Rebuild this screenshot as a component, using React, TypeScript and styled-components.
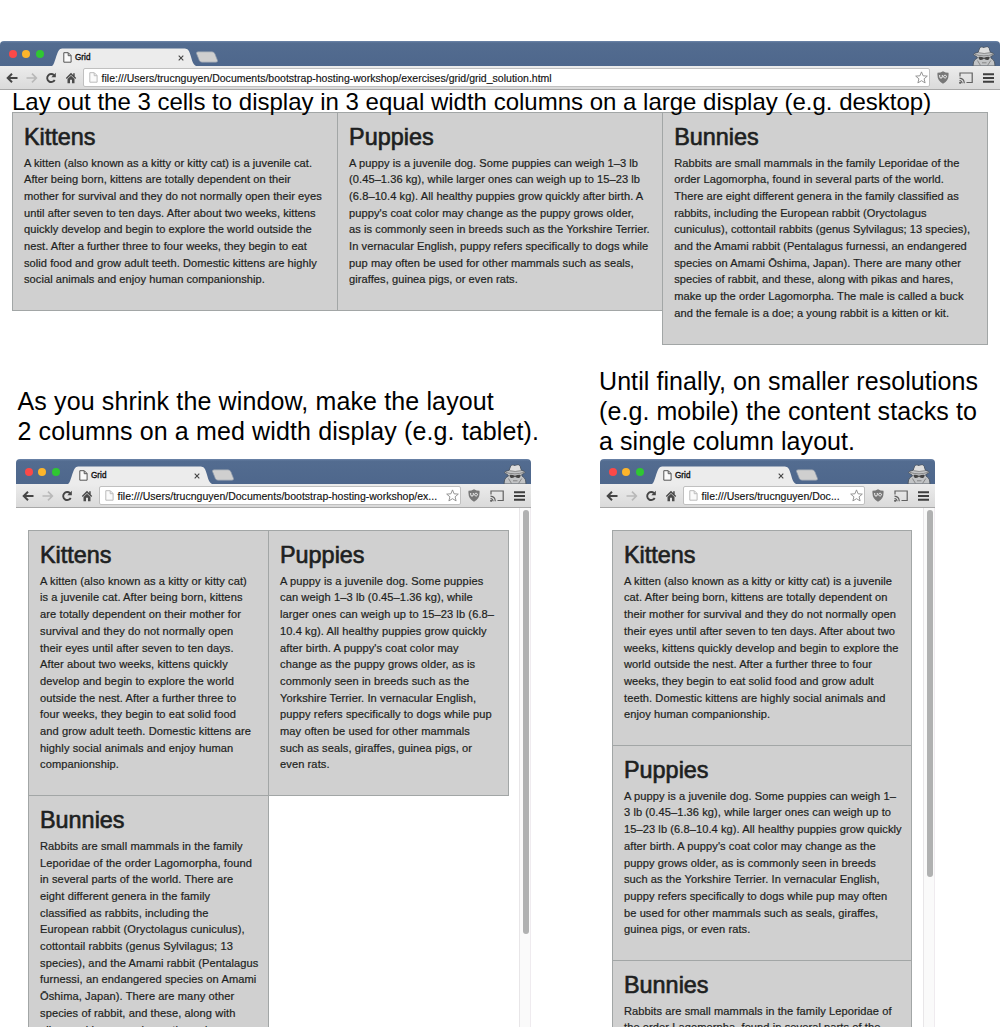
import React from "react";
import styled, { createGlobalStyle } from "styled-components";

const Global = createGlobalStyle`
  * { box-sizing: border-box; }
  html, body { margin: 0; padding: 0; background: #fff; }
  body { font-family: "Liberation Sans", Arial, Helvetica, sans-serif; color: #1d1f21; overflow: hidden; }
`;

const Page = styled.div`
  width: 1000px;
  height: 1027px;
  overflow: hidden;
  padding-top: 40.5px;
  display: flex;
  flex-direction: column;
`;

const Caption = styled.p<{ $size: number; $spacing?: number; $gap?: number; $indent?: number }>`
  margin: 0 0 ${(p) => p.$gap ?? 0}px ${(p) => p.$indent ?? 0}px;
  color: #000;
  font-size: ${(p) => p.$size}px;
  line-height: 30px;
  letter-spacing: ${(p) => p.$spacing ?? 0}px;
  white-space: pre;
`;

const WideCaption = styled(Caption)`
  margin: -3px 0 -5px 12px;
  position: relative;
  z-index: 1;
`;

const Examples = styled.div`
  display: flex;
  align-items: flex-end;
  margin-top: 22px;
`;

const Example = styled.section<{ $width: number; $left: number }>`
  width: ${(p) => p.$width}px;
  margin-left: ${(p) => p.$left}px;
`;

const Window = styled.div`
  width: 100%;
`;

const TabBar = styled.div`
  display: flex;
  align-items: flex-end;
  height: 25.5px;
  padding-left: 8.5px;
  background: linear-gradient(#6d86ab 0, #536c90 2px, #4e678c 100%);
  border-radius: 4px 4px 0 0;
`;

const Lights = styled.div`
  display: flex;
  gap: 5.8px;
  height: 25.5px;
  align-items: center;
  padding-top: 2px;
  width: 43.5px;
`;

const Light = styled.i<{ $color: string }>`
  width: 8px;
  height: 8px;
  border-radius: 50%;
  background: ${(p) => p.$color};
`;

const Tab = styled.div`
  position: relative;
  display: flex;
  align-items: center;
  width: 144px;
  height: 18px;
  padding: 1px 12.5px 0 11px;
  font-size: 8.2px;
  color: #111;
  -webkit-text-stroke: 0.35px #111;

  svg { position: relative; }
  & > svg:first-child { position: absolute; left: 0; top: 0; }
`;

const TabLabel = styled.span`
  position: relative;
  flex: 1;
  padding-left: 3px;
`;

const NewTab = styled.svg`
  margin: 0 0 3px 0;
`;

const Disguise = styled.svg`
  margin-left: auto;
  margin-right: 4px;
`;

const Toolbar = styled.div`
  display: flex;
  align-items: center;
  height: 24px;
  padding: 0 6px 0 6px;
  background: linear-gradient(#ececec, #dadada);
  border-bottom: 1px solid #a8a8a8;
`;

const Nav = styled.div`
  display: flex;
  gap: 7.5px;
  width: 77px;
  svg { width: 12px; height: 12px; flex: none; }
`;

const Address = styled.div`
  display: flex;
  align-items: center;
  flex: 1;
  min-width: 0;
  height: 18.5px;
  padding: 0 1.5px 0 4.5px;
  border: 1px solid #c0c0c0;
  border-radius: 2px;
  background: #fff;
  font-size: 10.5px;
`;

const Url = styled.span`
  flex: 1;
  min-width: 0;
  padding-left: 4px;
  color: #111;
  white-space: nowrap;
  overflow: hidden;
  letter-spacing: 0.015px;
  -webkit-text-stroke: 0.15px #111;
`;

const Extensions = styled.div`
  display: flex;
  align-items: center;
  justify-content: space-between;
  width: 57px;
  margin-left: 7px;
`;

const Body = styled.div<{ $height?: number }>`
  display: flex;
  ${(p) => (p.$height ? `height: ${p.$height}px; overflow: hidden;` : "")}
`;

const Grid = styled.div<{ $columns: number; $cell: number; $spacing: number }>`
  display: grid;
  grid-template-columns: repeat(${(p) => p.$columns}, ${(p) => p.$cell}px);
  align-items: start;
  align-content: start;
  margin: ${(p) => (p.$columns === 3 ? "0 0 0 12px" : "22px 0 0 12px")};
  p { letter-spacing: ${(p) => p.$spacing}px; }
`;

const Cell = styled.article`
  padding: 9px 0 22.2px 11px;
  background: #d0d0d0;
  border: 1px solid #a2a6a6;
  margin: 0 -1px -1px 0;
`;

const Heading = styled.h3`
  margin: 0 0 2.5px;
  font-size: 23.4px;
  line-height: 30px;
  font-weight: 400;
  -webkit-text-stroke: 0.65px #1d1f21;
`;

const Copy = styled.p`
  margin: 0;
  font-size: 11.1px;
  line-height: 16.7px;
  white-space: pre;
  -webkit-text-stroke: 0.2px #1d1f21;
`;

const Track = styled.div`
  width: 12px;
  margin-left: auto;
  padding: 2px 2px 0 2.5px;
  background: #fafafa;
  border-left: 1px solid #e8e6e8;
  border-right: 1px solid #efebef;
`;

const Thumb = styled.div<{ $height: number }>`
  width: 6px;
  height: ${(p) => p.$height}px;
  border-radius: 3px;
  background: #b0b1b1;
`;

const Sheet = ({ color }: { color: string }) => (
  <svg width="9" height="11" viewBox="0 0 9 11" fill="#fafafa" stroke={color}>
    <path d="M.8.7h4.5l2.8 2.8v6.7H.8zM5.2.9v2.8H8" />
  </svg>
);

const Chrome = ({ url }: { url: string }) => (
  <>
    <TabBar>
      <Lights>
        <Light $color="#fb4948" />
        <Light $color="#fdb52b" />
        <Light $color="#2fc732" />
      </Lights>
      <Tab>
        <svg width="144" height="18" viewBox="0 0 143 18" preserveAspectRatio="none">
          <path d="M0 18C3 16 4 6 7 2Q8 .5 10 .5H132Q135 .5 136 3C139 10 139 16 143 18Z" fill="#ececec" />
        </svg>
        <Sheet color="#555" />
        <TabLabel>Grid</TabLabel>
        <svg width="6" height="6" viewBox="0 0 6 6" stroke="#444" strokeWidth="1.1">
          <path d="M.7.7l4.6 4.6M5.3.7L.7 5.3" />
        </svg>
      </Tab>
      <NewTab width="22" height="12" viewBox="0 0 22 12">
        <path d="M2 .8H16Q18 .8 19 3L21.5 9.500Q22 11.200 20 11.200H6Q4 11.200 3.300 9.500L.5 2.500Q0 .8 2 .8Z" fill="#cfcfcf" stroke="#8e99aa" strokeWidth=".7" />
      </NewTab>
      <Disguise width="24" height="20" viewBox="0 0 24 20">
        <path d="M1 20Q1.200 15 3 13.500L5.500 12 4.500 10.500Q1.500 9.500 1.500 8.300 2 7 6.300 6.200L7.800 2Q8.500.8 10.500 1.200 12 1.800 14 1 16.300.5 17 2L18.200 6.200Q22 7 22 8.300 21.500 9.800 18.800 10.500L19 12 21 13.500Q23 15 23 20Z" fill="#c2c4c6" stroke="#4b535f" strokeWidth=".9" />
        <path d="M6.800 6.200L8.200 2.200Q9 1.300 10.500 1.700 12 2.300 14 1.500 16 1 16.600 2.300L17.700 6.200Q12 7.800 6.800 6.200z" fill="#dedede" />
        <path d="M2.500 8.300Q12 11.400 21 8.300" stroke="#777" strokeWidth=".8" fill="none" />
        <path d="M6.500 6.700Q12 8.300 18 6.700" stroke="#8a8a8a" strokeWidth=".9" fill="none" />
        <path d="M6.500 10.900Q9 10.500 12 11.800 15 10.500 17.700 10.900 17.500 14 15 14 13 14 12 12.600 11 14 9 14 6.700 14 6.500 10.900z" fill="#444" />
        <path d="M5.500 14.500L8.500 19.500M18.800 14.500L15.500 19.500M10 16.800h4.500" stroke="#808080" strokeWidth=".9" fill="none" />
      </Disguise>
    </TabBar>
    <Toolbar>
      <Nav>
        <svg viewBox="0 0 12 12" fill="none" stroke="#454545" strokeWidth="2"><path d="M11.500 6H2M6 1.700L1.700 6 6 10.300" /></svg>
        <svg viewBox="0 0 12 12" fill="none" stroke="#b9b9b9" strokeWidth="1.700"><path d="M.5 6H10M6 1.700L10.300 6 6 10.300" /></svg>
        <svg viewBox="0 0 12 12" fill="none" stroke="#454545" strokeWidth="1.900"><path d="M9.700 8A4 4 0 1 1 9 3.200" /><path d="M10.800.8V5.300H6.300z" fill="#454545" stroke="none" /></svg>
        <svg viewBox="0 0 12 12" fill="#4a4a4a"><path d="M6 .8L.8 6l1 1L6 2.900l4.200 4.100 1-1L9.700 4.500V1.300H8.200V3z" /><path d="M2.500 7L6 3.700 9.500 7v4.200H7V7.800H5v3.400H2.500z" /></svg>
      </Nav>
      <Address>
        <Sheet color="#bbb" />
        <Url>{url}</Url>
        <svg width="13" height="13" viewBox="0 0 13 13" fill="#fff" stroke="#8a8a8a" strokeWidth=".9">
          <path d="M6.500.9l1.600 3.900 4.200.3-3.200 2.700 1 4.100-3.600-2.200-3.600 2.200 1-4.100L.7 5.100l4.200-.3z" />
        </svg>
      </Address>
      <Extensions>
        <svg width="12" height="13" viewBox="0 0 12 13">
          <path d="M6 .3q2.500 1.500 5.500 1.500 .8 8-5.500 10.900Q-.3 9.800.5 1.800 3.500 1.800 6 .3z" fill="#777" />
          <path d="M2.700 4v1.800q0 1.300 1.300 1.300t1.300-1.300V4M8 4.200a1.400 1.400 0 1 0 .1 0z" stroke="#fff" fill="none" strokeWidth=".9" />
        </svg>
        <svg width="14" height="12" viewBox="0 0 14 12" fill="none" stroke="#606060" strokeWidth="1.200">
          <path d="M1 4.500V1h12.200v9.500H7.500M.5 6.200q4.500.3 4.800 5M.5 8.500q2.300.2 2.600 2.700" /><circle cx="1.100" cy="10.800" r=".5" />
        </svg>
        <svg width="11" height="10" viewBox="0 0 11 10" stroke="#3f3f3f" strokeWidth="2"><path d="M0 1.200h11M0 5h11M0 8.800h11" /></svg>
      </Extensions>
    </Toolbar>
  </>
);

const Animal = ({ name, lines }: { name: string; lines: string[] }) => (
  <Cell>
    <Heading>{name}</Heading>
    <Copy>{lines.join("\n")}</Copy>
  </Cell>
);

const wide = [
  { name: "Kittens", lines: [
    "A kitten (also known as a kitty or kitty cat) is a juvenile cat.",
    "After being born, kittens are totally dependent on their",
    "mother for survival and they do not normally open their eyes",
    "until after seven to ten days. After about two weeks, kittens",
    "quickly develop and begin to explore the world outside the",
    "nest. After a further three to four weeks, they begin to eat",
    "solid food and grow adult teeth. Domestic kittens are highly",
    "social animals and enjoy human companionship.",
  ] },
  { name: "Puppies", lines: [
    "A puppy is a juvenile dog. Some puppies can weigh 1–3 lb",
    "(0.45–1.36 kg), while larger ones can weigh up to 15–23 lb",
    "(6.8–10.4 kg). All healthy puppies grow quickly after birth. A",
    "puppy's coat color may change as the puppy grows older,",
    "as is commonly seen in breeds such as the Yorkshire Terrier.",
    "In vernacular English, puppy refers specifically to dogs while",
    "pup may often be used for other mammals such as seals,",
    "giraffes, guinea pigs, or even rats.",
  ] },
  { name: "Bunnies", lines: [
    "Rabbits are small mammals in the family Leporidae of the",
    "order Lagomorpha, found in several parts of the world.",
    "There are eight different genera in the family classified as",
    "rabbits, including the European rabbit (Oryctolagus",
    "cuniculus), cottontail rabbits (genus Sylvilagus; 13 species),",
    "and the Amami rabbit (Pentalagus furnessi, an endangered",
    "species on Amami Ōshima, Japan). There are many other",
    "species of rabbit, and these, along with pikas and hares,",
    "make up the order Lagomorpha. The male is called a buck",
    "and the female is a doe; a young rabbit is a kitten or kit.",
  ] },
];

const medium = [
  { name: "Kittens", lines: [
    "A kitten (also known as a kitty or kitty cat)",
    "is a juvenile cat. After being born, kittens",
    "are totally dependent on their mother for",
    "survival and they do not normally open",
    "their eyes until after seven to ten days.",
    "After about two weeks, kittens quickly",
    "develop and begin to explore the world",
    "outside the nest. After a further three to",
    "four weeks, they begin to eat solid food",
    "and grow adult teeth. Domestic kittens are",
    "highly social animals and enjoy human",
    "companionship.",
  ] },
  { name: "Puppies", lines: [
    "A puppy is a juvenile dog. Some puppies",
    "can weigh 1–3 lb (0.45–1.36 kg), while",
    "larger ones can weigh up to 15–23 lb (6.8–",
    "10.4 kg). All healthy puppies grow quickly",
    "after birth. A puppy's coat color may",
    "change as the puppy grows older, as is",
    "commonly seen in breeds such as the",
    "Yorkshire Terrier. In vernacular English,",
    "puppy refers specifically to dogs while pup",
    "may often be used for other mammals",
    "such as seals, giraffes, guinea pigs, or",
    "even rats.",
  ] },
  { name: "Bunnies", lines: [
    "Rabbits are small mammals in the family",
    "Leporidae of the order Lagomorpha, found",
    "in several parts of the world. There are",
    "eight different genera in the family",
    "classified as rabbits, including the",
    "European rabbit (Oryctolagus cuniculus),",
    "cottontail rabbits (genus Sylvilagus; 13",
    "species), and the Amami rabbit (Pentalagus",
    "furnessi, an endangered species on Amami",
    "Ōshima, Japan). There are many other",
    "species of rabbit, and these, along with",
    "pikas and hares, make up the order",
  ] },
];

const narrow = [
  { name: "Kittens", lines: [
    "A kitten (also known as a kitty or kitty cat) is a juvenile",
    "cat. After being born, kittens are totally dependent on",
    "their mother for survival and they do not normally open",
    "their eyes until after seven to ten days. After about two",
    "weeks, kittens quickly develop and begin to explore the",
    "world outside the nest. After a further three to four",
    "weeks, they begin to eat solid food and grow adult",
    "teeth. Domestic kittens are highly social animals and",
    "enjoy human companionship.",
  ] },
  { name: "Puppies", lines: [
    "A puppy is a juvenile dog. Some puppies can weigh 1–",
    "3 lb (0.45–1.36 kg), while larger ones can weigh up to",
    "15–23 lb (6.8–10.4 kg). All healthy puppies grow quickly",
    "after birth. A puppy's coat color may change as the",
    "puppy grows older, as is commonly seen in breeds",
    "such as the Yorkshire Terrier. In vernacular English,",
    "puppy refers specifically to dogs while pup may often",
    "be used for other mammals such as seals, giraffes,",
    "guinea pigs, or even rats.",
  ] },
  { name: "Bunnies", lines: [
    "Rabbits are small mammals in the family Leporidae of",
    "the order Lagomorpha, found in several parts of the",
    "world. There are eight different genera in the family",
  ] },
];

export default function App() {
  return (
    <>
      <Global />
      <Page>
        <Window>
          <Chrome url="file:///Users/trucnguyen/Documents/bootstrap-hosting-workshop/exercises/grid/grid_solution.html" />
          <WideCaption $size={24}>Lay out the 3 cells to display in 3 equal width columns on a large display (e.g. desktop)</WideCaption>
          <Grid $columns={3} $cell={325.1} $spacing={0.05}>
            {wide.map((a) => <Animal key={a.name} {...a} />)}
          </Grid>
        </Window>
        <Examples>
          <Example $width={515} $left={16}>
            <Caption $size={25} $spacing={0.13} $gap={13} $indent={1.5}>{"As you shrink the window, make the layout\n2 columns on a med width display (e.g. tablet)."}</Caption>
            <Window>
              <Chrome url="file:///Users/trucnguyen/Documents/bootstrap-hosting-workshop/ex..." />
              <Body $height={519}>
                <Grid $columns={2} $cell={240} $spacing={0.09}>
                  {medium.map((a) => <Animal key={a.name} {...a} />)}
                </Grid>
                <Track><Thumb $height={424} /></Track>
              </Body>
            </Window>
          </Example>
          <Example $width={335} $left={69}>
            <Caption $size={25} $spacing={0.08} $gap={3} $indent={-1}>{"Until finally, on smaller resolutions\n(e.g. mobile) the content stacks to\na single column layout."}</Caption>
            <Window>
              <Chrome url="file:///Users/trucnguyen/Doc..." />
              <Body $height={519}>
                <Grid $columns={1} $cell={299} $spacing={0.07}>
                  {narrow.map((a) => <Animal key={a.name} {...a} />)}
                </Grid>
                <Track><Thumb $height={367} /></Track>
              </Body>
            </Window>
          </Example>
        </Examples>
      </Page>
    </>
  );
}
